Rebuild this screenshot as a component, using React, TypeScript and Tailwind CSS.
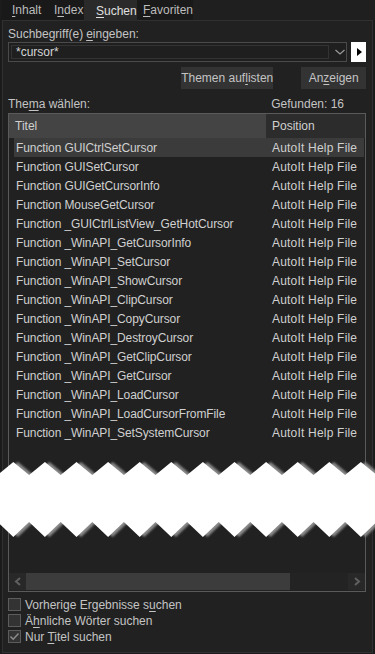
import React from "react";

const rows = [
  "Function GUICtrlSetCursor",
  "Function GUISetCursor",
  "Function GUIGetCursorInfo",
  "Function MouseGetCursor",
  "Function _GUICtrlListView_GetHotCursor",
  "Function _WinAPI_GetCursorInfo",
  "Function _WinAPI_SetCursor",
  "Function _WinAPI_ShowCursor",
  "Function _WinAPI_ClipCursor",
  "Function _WinAPI_CopyCursor",
  "Function _WinAPI_DestroyCursor",
  "Function _WinAPI_GetClipCursor",
  "Function _WinAPI_GetCursor",
  "Function _WinAPI_LoadCursor",
  "Function _WinAPI_LoadCursorFromFile",
  "Function _WinAPI_SetSystemCursor",
];

function U({ children }: { children: React.ReactNode }) {
  return <span className="underline underline-offset-2">{children}</span>;
}

function Torn() {
  const period = 31.6;
  const start = 13.3;
  const topPts: string[] = [];
  const botPts: string[] = [];
  for (let i = -1; i < 14; i++) {
    const px = start + i * period;
    topPts.push(`${px},2`);
    topPts.push(`${px + period / 2},15`);
    botPts.push(`${px},77`);
    botPts.push(`${px + period / 2},62`);
  }
  const top = topPts.join(" L ");
  const bot = botPts.reverse().join(" L ");
  const d = `M ${top} L 400,15 L 400,70 L ${bot} L -30,70 Z`;
  return (
    <svg width="375" height="80" viewBox="0 0 375 80" className="absolute left-0 top-[460px]">
      <defs>
        <filter id="b" x="-10%" y="-50%" width="120%" height="200%">
          <feGaussianBlur stdDeviation="1.3" />
        </filter>
      </defs>
      <path d={d} transform="translate(4.5,0)" fill="#8a8a8a" filter="url(#b)" />
      <path d={d} fill="#ffffff" />
    </svg>
  );
}

function Check({ checked }: { checked?: boolean }) {
  return (
    <div className="w-[13px] h-[13px] border border-[#5c5c5c] bg-[#333333] flex items-center justify-center">
      {checked && (
        <svg width="11" height="11" viewBox="0 0 11 11">
          <path d="M1.5 5.5 L4.2 8.2 L9.5 2.5" stroke="#8c8c8c" strokeWidth="1.5" fill="none" />
        </svg>
      )}
    </div>
  );
}

export default function App() {
  return (
    <div
      className="w-[375px] h-[654px] bg-[#1b1b1b] relative overflow-hidden text-[12px] leading-none text-[#c4c4c4]"
      style={{ fontFamily: "'Liberation Sans', Arial, sans-serif" }}
    >
      {/* Tabs */}
      <div className="h-[20px] flex">
        <div className="w-[2px]" />
        <div className="flex bg-[#191919] whitespace-nowrap">
          <div className="w-[42px] pl-[10px] flex items-center text-[#bcbcbc]">
            <U>I</U>nhalt
          </div>
          <div className="w-[40px] pl-[10px] flex items-center text-[#bcbcbc]">
            I<U>n</U>dex
          </div>
          <div className="w-[53px] pl-[12px] flex items-center bg-[#2a2a2a] h-[21px] text-[#e0e0e0] relative z-10">
            <U>S</U>uchen
          </div>
          <div className="w-[56px] pl-[6px] flex items-center text-[#bcbcbc]">
            <U>F</U>avoriten
          </div>
        </div>
        <div className="flex-1 bg-[#1f1f1f]" />
      </div>

      {/* Panel */}
      <div className="mx-[2px] h-[633px] border border-[#303030] bg-[#212121] pl-[5px] pr-[6px] flex flex-col">
        <div className="mt-[7px] h-[12px] flex items-center">
          Suchbegriff(e) <span className="ml-[3px]"><U>e</U>ingeben:</span>
        </div>
        <div className="mt-[2px] flex items-center h-[20px]">
          <div className="w-[340px] h-[20px] border border-[#4a4a4a] bg-[#1f1f1f] flex items-center">
            <div className="ml-[2px] w-[318px] h-[14px] border border-[#333333] flex items-center pl-[4px] text-[#d6d6d6]">
              *cursor*
            </div>
            <svg width="12" height="8" viewBox="0 0 12 8" className="ml-[5px]">
              <path d="M1.5 2 L6 6 L10.5 2" stroke="#9a9a9a" strokeWidth="1.2" fill="none" />
            </svg>
          </div>
          <div className="ml-[4px] w-[15px] h-[20px] bg-white flex items-center justify-center">
            <svg width="8" height="10" viewBox="0 0 8 10">
              <path d="M2 1 L7 5 L2 9 Z" fill="#000" />
            </svg>
          </div>
        </div>
        <div className="mt-[5px] flex h-[22px]">
          <div className="ml-[173px] w-[93px] h-[22px] bg-[#333333] flex items-center justify-center text-[#c4c4c4]">
            Themen auf<U>l</U>isten
          </div>
          <div className="ml-[28px] w-[65px] h-[22px] bg-[#333333] flex items-center justify-center text-[#c4c4c4]">
            An<U>z</U>eigen
          </div>
        </div>
        <div className="mt-[9px] h-[12px] flex items-center justify-between pr-[22px]">
          <span>
            The<U>m</U>a wählen:
          </span>
          <span>Gefunden: 16</span>
        </div>
        <div className="mt-[3px] w-[358px] h-[479px] border border-[#5a5a5a] bg-[#212121] flex flex-col">
          <div className="flex h-[24px] shrink-0">
            <div className="w-[257px] bg-[#444444] flex items-center pl-[6px] text-[#d0d0d0]">Titel</div>
            <div className="flex-1 bg-[#2c2c2c] flex items-center pl-[6px] text-[#d0d0d0]">Position</div>
          </div>
          <div className="flex flex-col pl-[5px] pr-[1px]">
            {rows.map((r, i) => (
              <div
                key={r}
                className={`h-[19px] flex items-center text-[#d0d0d0] ${i === 0 ? "bg-[#3b3b3b]" : ""}`}
              >
                <div className="w-[256px] pl-[2px] whitespace-nowrap tracking-[-0.1px]">{r}</div>
                <div className="pl-[2px] whitespace-nowrap tracking-[0.2px]">AutoIt Help File</div>
              </div>
            ))}
          </div>
          <div className="flex-1" />
          <div className="h-[17px] flex mb-[1px]">
            <div className="w-[17px] bg-[#282828] flex items-center justify-center">
              <svg width="8" height="9" viewBox="0 0 8 9">
                <path d="M6 1 L2 4.5 L6 8" stroke="#606060" strokeWidth="2" fill="none" />
              </svg>
            </div>
            <div className="w-[264px] bg-[#3c3c3c]" />
            <div className="flex-1 bg-[#232323]" />
            <div className="w-[17px] bg-[#282828] flex items-center justify-center">
              <svg width="8" height="9" viewBox="0 0 8 9">
                <path d="M2 1 L6 4.5 L2 8" stroke="#606060" strokeWidth="2" fill="none" />
              </svg>
            </div>
          </div>
        </div>
        <div className="mt-[6px] flex flex-col gap-[3px]">
          <div className="flex items-center gap-[4px] h-[13px]">
            <Check />
            <span>
              Vorherige Ergebnisse s<U>u</U>chen
            </span>
          </div>
          <div className="flex items-center gap-[4px] h-[13px]">
            <Check />
            <span>
              Ä<U>h</U>nliche Wörter suchen
            </span>
          </div>
          <div className="flex items-center gap-[4px] h-[13px]">
            <Check checked />
            <span>
              Nur <U>T</U>itel suchen
            </span>
          </div>
        </div>
      </div>

      <Torn />
    </div>
  );
}
